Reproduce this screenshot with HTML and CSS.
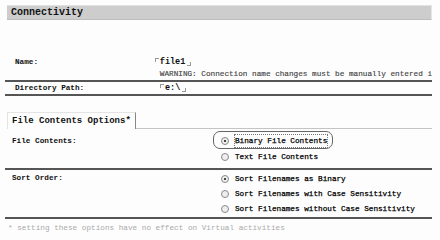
FILE: index.html
```html
<!DOCTYPE html>
<html>
<head>
<meta charset="utf-8">
<link rel="stylesheet" href="styles.css">
</head>
<body>
<div class="header">Connectivity</div>

<div class="section">
  <div class="row row-name">
    <div class="label">Name:</div>
    <div class="value">
      <div class="field"><span class="cnr cnr-tl"></span><span class="fval">file1</span><span class="cnr cnr-br"></span></div>
      <div class="warn">WARNING: Connection name changes must be manually entered i</div>
    </div>
  </div>
  <div class="row row-dir">
    <div class="label">Directory Path:</div>
    <div class="value">
      <div class="field"><span class="cnr cnr-tl"></span><span class="fval">e:\</span><span class="cnr cnr-br"></span></div>
    </div>
  </div>
</div>

<div class="tabs">
  <div class="tab">File Contents Options*</div>
  <div class="tabfill"></div>
</div>

<div class="section section2">
  <div class="row row-contents">
    <div class="label2">File Contents:</div>
    <div class="opts">
      <div class="opt focus"><span class="radio on"></span><span class="otext ring">Binary File Contents</span></div>
      <div class="opt"><span class="radio"></span><span class="otext">Text File Contents</span></div>
    </div>
  </div>
  <div class="row row-sort">
    <div class="label2">Sort Order:</div>
    <div class="opts">
      <div class="opt"><span class="radio on"></span><span class="otext">Sort Filenames as Binary</span></div>
      <div class="opt"><span class="radio"></span><span class="otext">Sort Filenames with Case Sensitivity</span></div>
      <div class="opt"><span class="radio"></span><span class="otext">Sort Filenames without Case Sensitivity</span></div>
    </div>
  </div>
</div>

<div class="note">* setting these options have no effect on Virtual activities</div>
</body>
</html>
```
FILE: styles.css
```css
html, body {
  margin: 0;
  padding: 0;
  background: #fdfdfd;
  width: 440px;
  height: 240px;
  overflow: hidden;
  font-family: "Liberation Mono", "DejaVu Sans Mono", monospace;
  color: #111;
}
.header {
  margin: 5px 8px 0 7px;
  height: 13px;
  line-height: 13px;
  background: #cdcdcd;
  border-top: 1px solid #e2e2e2;
  border-bottom: 1px solid #bdbdbd;
  border-right: 1px solid #e6e6e6;
  padding-left: 4px;
  font-size: 10px;
  font-weight: bold;
  color: #111;
}
.section {
  margin: 36px 8px 0 5px;
}
.row {
  display: flex;
  border-bottom: 2px solid #555;
  font-size: 7.7px;
}
.label {
  width: 145px;
  padding-left: 10px;
  line-height: 12px;
  font-weight: bold;
}
.value {
  line-height: 12px;
}
.field {
  display: flex;
  align-items: center;
  height: 12px;
}
.fval {
  font-weight: bold;
  font-size: 8.5px;
  margin: 0 2px 0 1px;
}
.cnr {
  display: inline-block;
  width: 3px;
  height: 3px;
  border-color: #999;
  border-style: solid;
}
.cnr-tl {
  border-width: 1px 0 0 1px;
  align-self: flex-start;
  margin-top: 2px;
}
.cnr-br {
  border-width: 0 1px 1px 0;
  align-self: flex-end;
  margin-bottom: 2px;
}
.warn {
  color: #444;
  white-space: nowrap;
  padding-left: 5px;
  -webkit-text-stroke: 0.15px #444;
}
.tabs {
  display: flex;
  margin: 16px 8px 0 7px;
  height: 17px;
}
.tab {
  border-top: 1px solid #e4e4e4;
  border-left: 1px solid #e4e4e4;
  border-right: 1px solid #888;
  padding: 0 4px;
  line-height: 16px;
  font-size: 9px;
  font-weight: bold;
  background: #fdfdfd;
}
.tabfill {
  flex: 1;
  border-bottom: 1px solid #c4c4c4;
}
.section2 {
  margin-top: 1px;
}
.label2 {
  width: 201px;
  padding-left: 7px;
  line-height: 15px;
  font-weight: bold;
}
.row-contents {
  padding: 4px 0;
}
.row-sort {
  padding: 1px 0 1px;
}
.opts {
  display: flex;
  flex-direction: column;
  align-items: flex-start;
}
.opt {
  display: flex;
  align-items: center;
  height: 15px;
  padding: 0 5px 0 7px;
  box-sizing: border-box;
  border: 1px solid transparent;
  white-space: nowrap;
}
.opt.focus {
  border-color: #666;
  border-radius: 7px;
  height: 18px;
  margin-top: -3px;
  padding-top: 1px;
}
.radio {
  flex-shrink: 0;
  display: inline-block;
  width: 6px;
  height: 6px;
  border-radius: 50%;
  border: 1px solid #8a8a8a;
  background: #eee;
  margin-right: 6px;
  position: relative;
}
.radio.on::after {
  content: "";
  position: absolute;
  left: 2px;
  top: 2px;
  width: 2px;
  height: 2px;
  border-radius: 50%;
  background: #111;
}
.otext {
  line-height: 12px;
  color: #000;
  -webkit-text-stroke: 0.25px #000;
}
.ring {
  outline: 1px dotted #777;
  outline-offset: 0;
}
.note {
  margin: 3px 0 0 8px;
  font-size: 7.7px;
  line-height: 12px;
  color: #aaa;
  white-space: nowrap;
}
```
